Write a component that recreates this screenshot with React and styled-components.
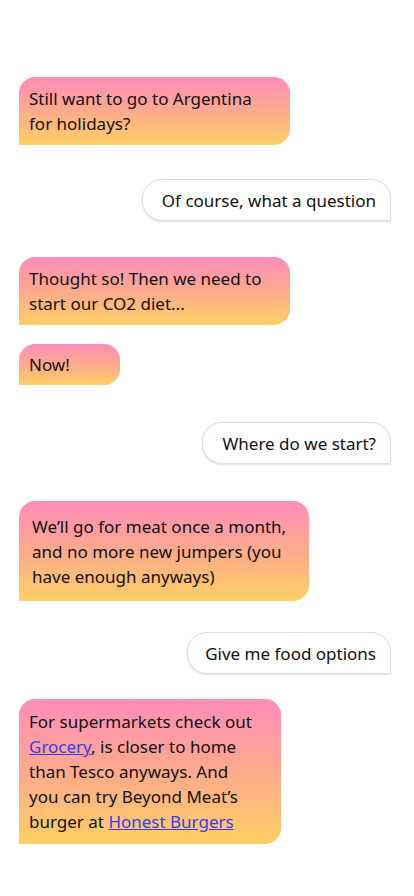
import React from 'react';
import styled, { createGlobalStyle } from 'styled-components';

const GlobalStyle = createGlobalStyle`
	body {
		margin: 0;
		background: #fff;
		font-family: "Noto Sans", "Open Sans", sans-serif;
		color: #111;
	}
`;

const Thread = styled.div`
	display: flex;
	flex-direction: column;
	padding: 77px 23px 40px 19px;
`;

const Received = styled.div`
	align-self: flex-start;
	box-sizing: border-box;
	width: ${({ $w }) => $w}px;
	margin-top: ${({ $gap }) => $gap || 0}px;
	padding: ${({ $py }) => $py}px ${({ $px }) => $px || 10}px;
	border-radius: 16px 16px 16px 0;
	background: linear-gradient(180deg, #ff8dbb 0%, #fdaa8d 50%, #fdd064 100%);
	font-size: 17px;
	line-height: 25px;
	white-space: nowrap;
`;

const Line = styled.span`
	display: block;
`;

const Sent = styled.div`
	align-self: flex-end;
	box-sizing: border-box;
	height: 42px;
	margin-top: ${({ $gap }) => $gap || 0}px;
	padding: 0 14px 0 ${({ $pl }) => $pl || 16}px;
	display: flex;
	align-items: center;
	border: 1px solid #dcdcdc;
	border-radius: 20px 20px 0 20px;
	background: #fff;
	box-shadow: 0 1px 2px rgba(0, 0, 0, 0.12);
	font-size: 17px;
	white-space: nowrap;
`;

const Link = styled.a`
	color: #3b3bf0;
	text-decoration: underline;
`;

const messages = [
	{ from: 'them', w: 271, py: 9, lines: ['Still want to go to Argentina', 'for holidays?'] },
	{ from: 'me', gap: 34, pl: 19, lines: ['Of course, what a question'] },
	{ from: 'them', gap: 36, w: 271, py: 9, lines: ['Thought so! Then we need to', 'start our CO2 diet...'] },
	{ from: 'them', gap: 19, w: 101, py: 8, lines: ['Now!'] },
	{ from: 'me', gap: 37, pl: 20, lines: ['Where do we start?'] },
	{ from: 'them', gap: 37, w: 290, py: 12.5, px: 13, lines: ['We’ll go for meat once a month,', 'and no more new jumpers (you', 'have enough anyways)'] },
	{ from: 'me', gap: 31, pl: 17, lines: ['Give me food options'] },
	{
		from: 'them', gap: 25, w: 262, py: 10, lines: [
			'For supermarkets check out',
			<><Link href="#">Grocery</Link>, is closer to home</>,
			'than Tesco anyways. And',
			'you can try Beyond Meat’s',
			<>burger at <Link href="#">Honest Burgers</Link></>,
		],
	},
];

const App = () => {
	return (
		<>
			<GlobalStyle />
			<Thread>
				{messages.map((m, i) =>
					m.from === 'me'
						? <Sent key={i} $gap={m.gap} $pl={m.pl}>{m.lines[0]}</Sent>
						: (
							<Received key={i} $gap={m.gap} $w={m.w} $py={m.py} $px={m.px}>
								{m.lines.map((l, j) => <Line key={j}>{l}</Line>)}
							</Received>
						)
				)}
			</Thread>
		</>
	);
};

export default App;
